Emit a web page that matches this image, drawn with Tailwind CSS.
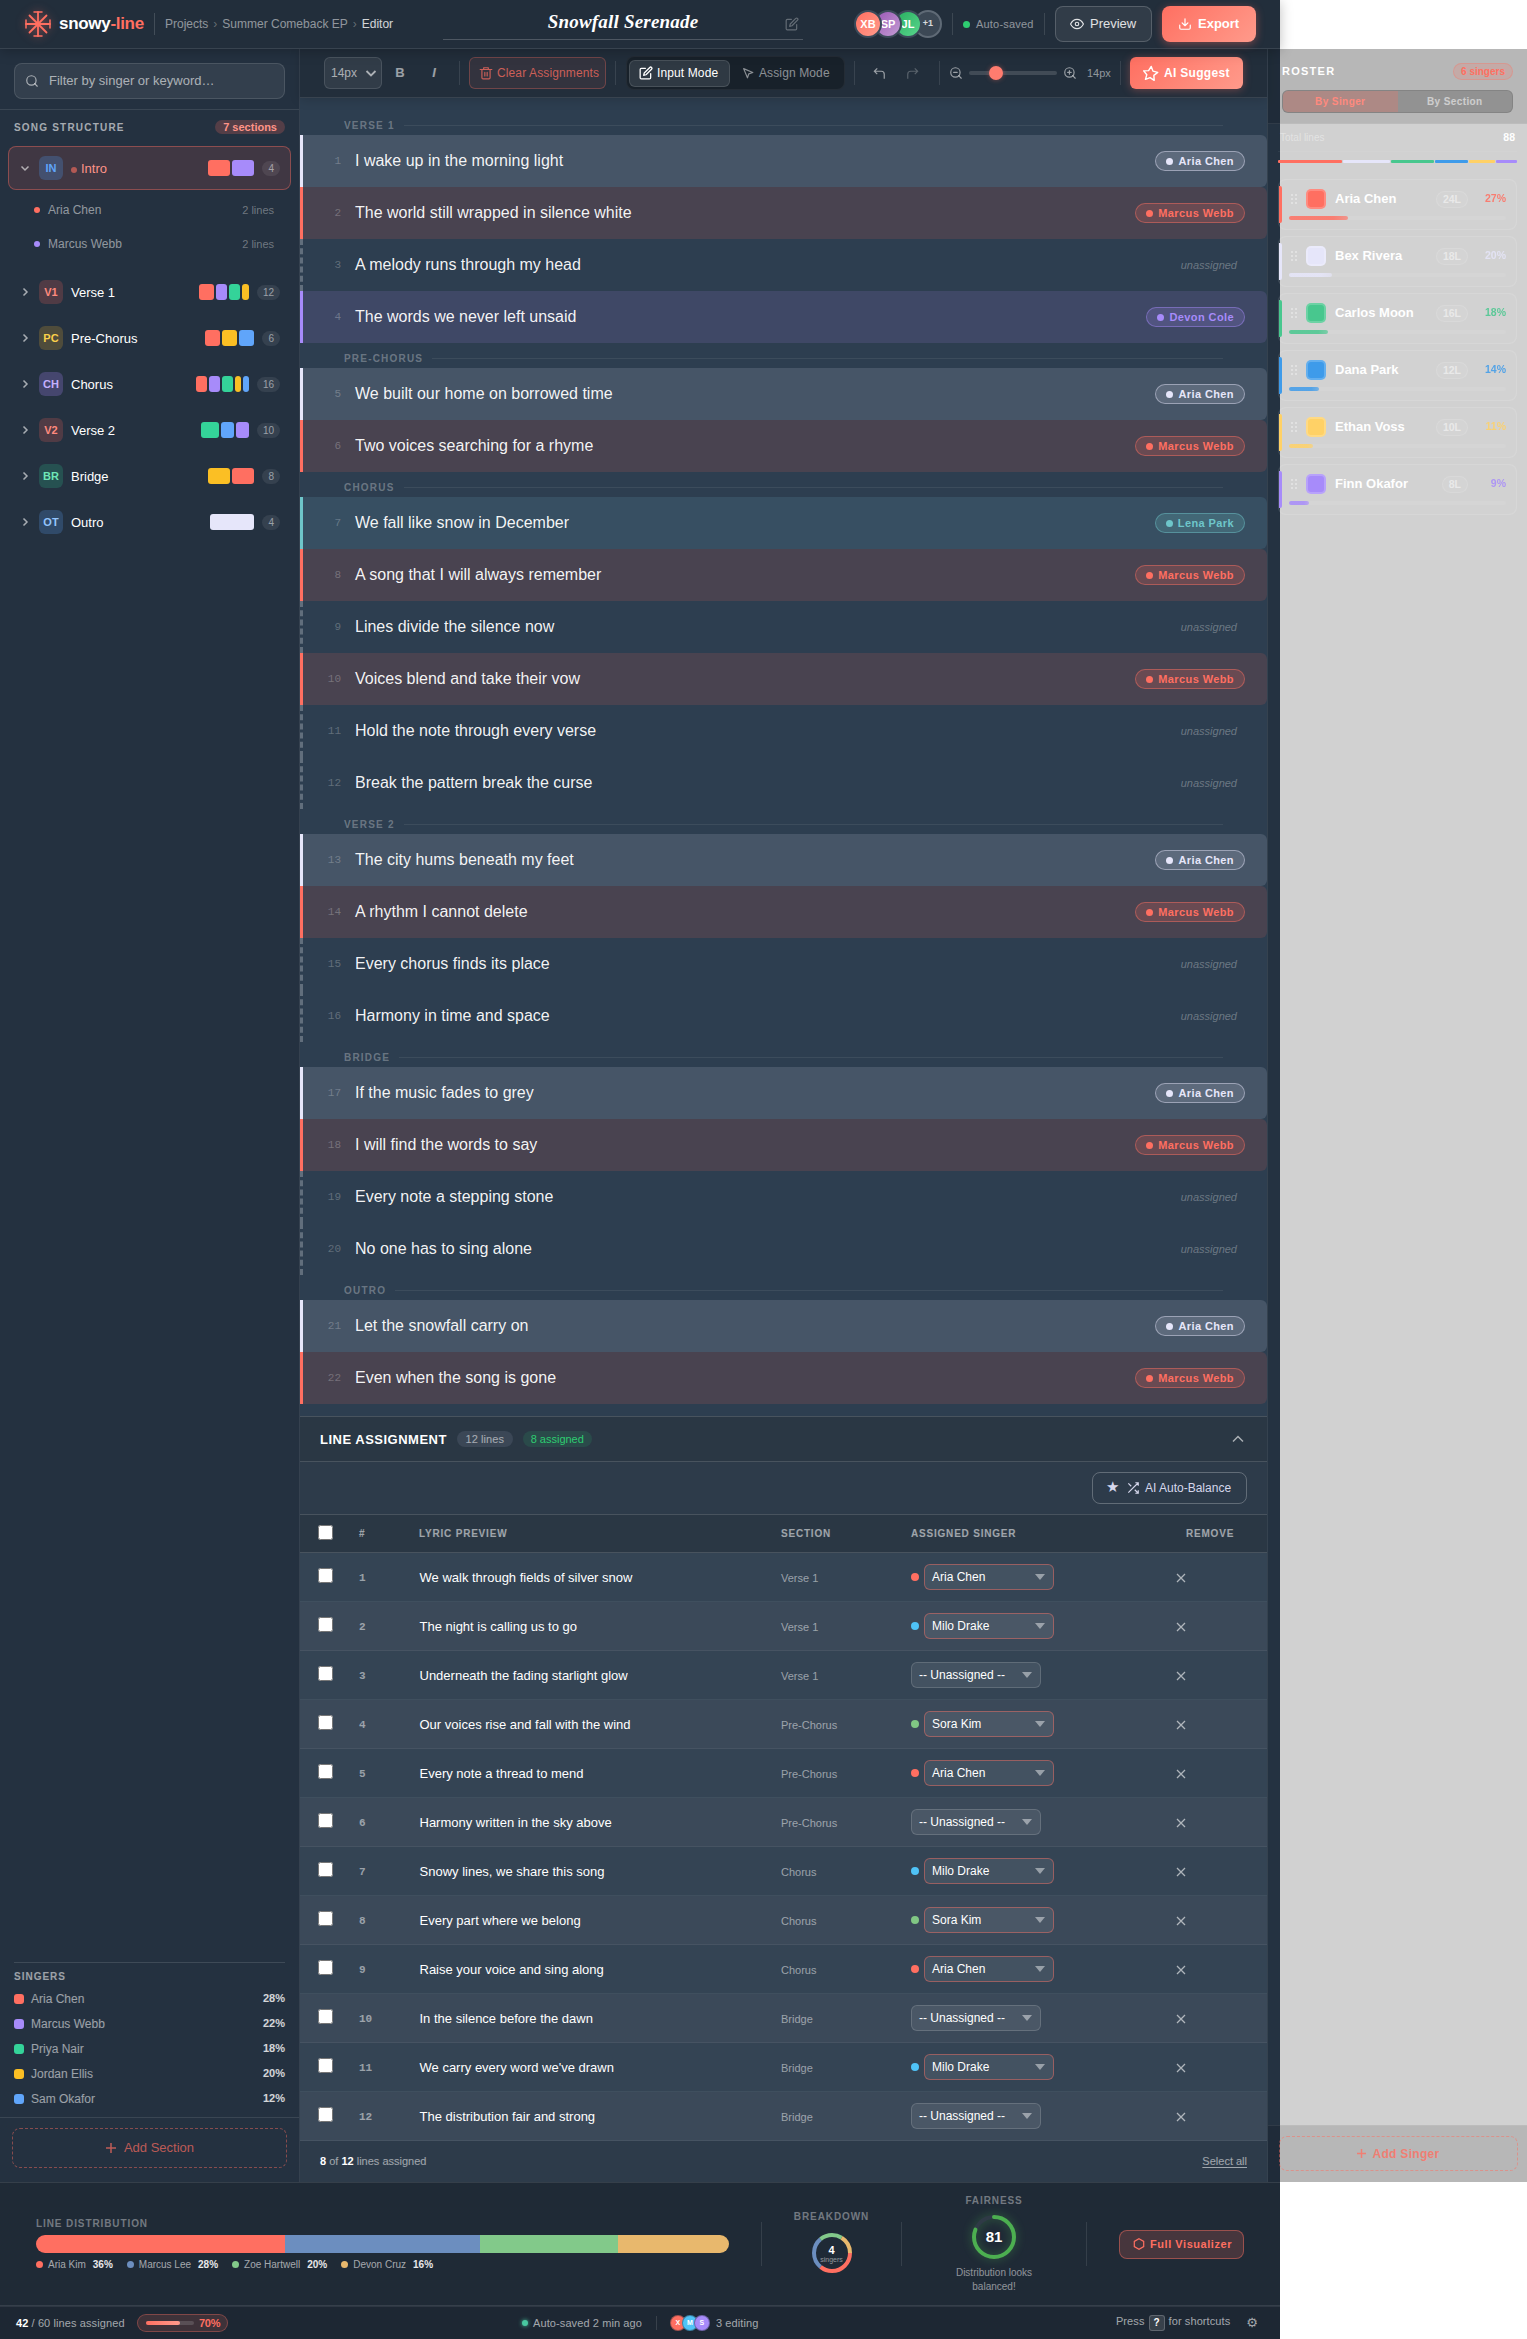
<!DOCTYPE html>
<html lang="en">
<head>
    <meta charset="UTF-8">
    <meta name="viewport" content="width=device-width, initial-scale=1.0">
    <title>snowy-line • Editor</title>
    <script src="https://cdn.jsdelivr.net/npm/@tailwindcss/browser@4"></script>
</head>
<body class="bg-white text-white font-['Liberation_Sans',Arial,sans-serif] antialiased overflow-hidden">

<div class="w-[1280px] h-[2339px] flex flex-col bg-[#2d3e50]">

    <!-- Header -->
    <header class="h-[49px] shrink-0 flex items-center pl-6 border-b border-white/10 bg-[#222e3b] shadow-[0_2px_12px_rgba(0,0,0,0.25)] relative z-10">
        <svg class="w-7 h-7 shrink-0 drop-shadow-[0_0_4px_rgba(255,111,97,0.5)]" viewBox="0 0 28 28" fill="none" stroke="#ff6f61" stroke-width="1.8" stroke-linecap="round">
            <path d="M14 2v24M2 14h24M5.5 5.5l17 17M22.5 5.5l-17 17" />
            <path d="M10 2h8M10 26h8M2 10v8M26 10v8" stroke-width="1.5" />
            <circle cx="14" cy="14" r="2.2" fill="#ff6f61" stroke="none" />
        </svg>
        <div class="ml-[7px] w-[95px] text-[17px] font-bold tracking-[-0.3px]">snowy<span class="text-[#ff6f61]">-line</span></div>
        <div class="w-px h-[22px] bg-white/15"></div>
        <nav class="ml-[10px] w-[278px] flex gap-[5px] text-xs text-white/50">
            <span>Projects</span><span class="text-white/30">›</span><span>Summer Comeback EP</span><span class="text-white/30">›</span><span class="text-white/80">Editor</span>
        </nav>
        <div class="w-[360px] h-8 border-b border-white/20 flex items-center relative">
            <div class="w-full text-center font-['Liberation_Serif',serif] italic font-bold text-[19px] tracking-[0.2px] pb-[3px]">Snowfall Serenade</div>
            <svg class="absolute right-[4px] top-[9px] w-[14px] h-[14px] text-white/30" viewBox="0 0 24 24" fill="none" stroke="currentColor" stroke-width="2" stroke-linecap="round" stroke-linejoin="round"><path d="M11 4H4a2 2 0 0 0-2 2v14a2 2 0 0 0 2 2h14a2 2 0 0 0 2-2v-7"/><path d="M18.5 2.5a2.12 2.12 0 0 1 3 3L12 15l-4 1 1-4z"/></svg>
        </div>
        <div class="ml-[51px] flex text-[11px] font-bold">
            <div class="w-7 h-7 rounded-full border-2 border-[#3b4a59] bg-linear-135 from-[#ff6f61] to-[#ff9a8b] flex items-center justify-center relative z-3">XB</div>
            <div class="w-7 h-7 -ml-2 rounded-full border-2 border-[#3b4a59] bg-linear-135 from-[#9b59b6] to-[#c39bd3] flex items-center justify-center relative z-2">SP</div>
            <div class="w-7 h-7 -ml-2 rounded-full border-2 border-[#3b4a59] bg-linear-135 from-[#27ae60] to-[#58d68d] flex items-center justify-center relative z-1">JL</div>
            <div class="w-7 h-7 -ml-2 rounded-full border-2 border-[#5f6a76] bg-[#3c4855] flex items-center justify-center text-[9px] text-white/80">+1</div>
        </div>
        <div class="ml-[10px] w-px h-[22px] bg-white/12"></div>
        <div class="ml-[10px] w-[7px] h-[7px] rounded-full bg-[#2ecc71]"></div>
        <div class="ml-[6px] w-[68px] text-[11px] tracking-[0.2px] text-white/50">Auto-saved</div>
        <div class="w-px h-[22px] bg-white/12"></div>
        <button class="ml-[10px] mb-px w-[97px] h-9 rounded-lg border border-white/18 bg-white/7 flex items-center pl-[14px] text-[13px] text-white/85">
            <svg class="w-[14px] h-[14px] mr-[6px]" viewBox="0 0 24 24" fill="none" stroke="currentColor" stroke-width="2"><path d="M1 12s4-8 11-8 11 8 11 8-4 8-11 8-11-8-11-8z"/><circle cx="12" cy="12" r="3"/></svg>Preview
        </button>
        <button class="ml-[10px] mb-px w-[94px] h-9 rounded-lg bg-linear-135 from-[#ff6f61] to-[#ff9a8b] shadow-[0_2px_8px_rgba(255,111,97,0.4)] flex items-center pl-4 text-[13px] font-bold">
            <svg class="w-[14px] h-[14px] mr-[6px]" viewBox="0 0 24 24" fill="none" stroke="currentColor" stroke-width="2" stroke-linecap="round" stroke-linejoin="round"><path d="M3 14v5a2 2 0 0 0 2 2h14a2 2 0 0 0 2-2v-5M7 10l5 5 5-5M12 15V3"/></svg>Export
        </button>
    </header>

    <main class="h-[2133px] w-[1527px] shrink-0 flex">

        <!-- Sidebar -->
        <aside class="w-[300px] shrink-0 border-r border-white/8 bg-[#243140] flex flex-col">
            <div class="h-[61px] shrink-0 border-b border-white/10 pt-[14px] px-[14px]">
                <div class="h-9 w-[271px] rounded-lg border border-white/12 bg-white/7 flex items-center pl-[10px] text-[13px] text-white/60">
                    <svg class="w-[14px] h-[14px] mr-[10px]" viewBox="0 0 24 24" fill="none" stroke="currentColor" stroke-width="2" stroke-linecap="round"><circle cx="11" cy="11" r="8"/><path d="M21 21l-4.35-4.35"/></svg>Filter by singer or keyword…
                </div>
            </div>
            <div class="h-[34px] mb-[2px] shrink-0 flex items-center justify-between px-[14px]">
                <span class="text-[10px] font-bold tracking-[1.2px] text-white/60">SONG STRUCTURE</span>
                <span class="h-[14px] leading-[14px] rounded-full bg-[#ff6f61]/22 px-2 text-[11px] font-bold text-[#ff9488]">7 sections</span>
            </div>
            <div id="sections" class="flex flex-col px-2"></div>

            <div class="mt-auto px-[14px]">
                <div class="border-t border-white/12 pt-[7px] text-[10px] leading-[14px] font-bold tracking-[1px] text-white/55">SINGERS</div>
                <div id="legend" class="mt-[2px] mb-[6px]"></div>
            </div>
            <div class="h-[65px] shrink-0 border-t border-white/10 pt-[10px] px-3">
                <div class="h-10 w-[275px] rounded-lg border border-dashed border-[#ff6f61]/45 flex items-center justify-center text-[13px] text-[#ff6f61]/70">
                    <svg class="w-3 h-3 mr-[7px]" viewBox="0 0 12 12" stroke="currentColor" stroke-width="1.5"><path d="M6 1v10M1 6h10"/></svg>Add Section
                </div>
            </div>
        </aside>

        <!-- Editor -->
        <section class="w-[967px] shrink-0 flex flex-col">
            <div class="h-[49px] shrink-0 border-b border-white/10 bg-[#222e3b] flex items-center pl-6 text-xs shadow-[0_2px_10px_rgba(0,0,0,0.15)]">
                <div class="w-[58px] h-8 rounded-md border border-white/12 bg-white/7 flex items-center pl-[6px] text-white/60">14px
                    <svg class="w-3 h-3 ml-[8px]" viewBox="0 0 12 12" fill="none" stroke="currentColor" stroke-width="1.8"><path d="M1.500 4l4.500 4.500L10.500 4"/></svg>
                </div>
                <div class="ml-[2px] w-8 text-center text-[13px] font-bold text-white/55">B</div>
                <div class="ml-[2px] w-8 text-center text-[13px] font-bold italic text-white/55">I</div>
                <div class="ml-[9px] w-px h-6 bg-white/10"></div>
                <div class="ml-[9px] w-[137px] h-8 rounded-md border border-[#ff6f61]/30 bg-[#ff6f61]/8 flex items-center pl-[9px] tracking-[0.12px] text-[#ff6f61]/75">
                    <svg class="w-[14px] h-[14px] mr-[4px]" viewBox="0 0 24 24" fill="none" stroke="currentColor" stroke-width="2" stroke-linecap="round" stroke-linejoin="round"><path d="M2 6h20M19 6v14a2 2 0 0 1-2 2H7a2 2 0 0 1-2-2V6M8 6V3h8v3M10 11v6M14 11v6"/></svg>Clear Assignments
                </div>
                <div class="ml-[9px] w-px h-6 bg-white/10"></div>
                <div class="ml-[10px] w-[219px] h-[34px] rounded-lg border border-white/5 bg-[#18212a] flex items-center pl-[2px] tracking-[0.12px]">
                    <div class="w-[101px] h-[27px] rounded-md border border-white/12 bg-[#2f3943] flex items-center pl-[9px] text-white">
                        <svg class="w-[14px] h-[14px] mr-[4px]" viewBox="0 0 24 24" fill="none" stroke="currentColor" stroke-width="2.200" stroke-linecap="round" stroke-linejoin="round"><path d="M11 4H4a2 2 0 0 0-2 2v14a2 2 0 0 0 2 2h14a2 2 0 0 0 2-2v-7"/><path d="M18.500 2.500a2.120 2.120 0 0 1 3 3L12 15l-4 1 1-4z"/></svg>Input Mode
                    </div>
                    <div class="ml-[12px] flex items-center text-white/50">
                        <svg class="w-[13px] h-[13px] mr-[4px]" viewBox="0 0 24 24" fill="none" stroke="currentColor" stroke-width="2.200" stroke-linejoin="round"><path d="M3 3l7.070 16.970 2.510-7.390 7.390-2.510z"/></svg>Assign Mode
                    </div>
                </div>
                <div class="ml-[9px] w-px h-6 bg-white/10"></div>
                <svg class="ml-[17px] w-[14px] h-[14px] text-white/55" viewBox="0 0 24 24" fill="none" stroke="currentColor" stroke-width="2"><path d="M9 14L4 9l5-5M4 9h12a5 5 0 0 1 5 5v8" /></svg>
                <svg class="ml-[20px] w-[14px] h-[14px] text-white/25" viewBox="0 0 24 24" fill="none" stroke="currentColor" stroke-width="2"><path d="M15 14l5-5-5-5M20 9H8a5 5 0 0 0-5 5v8" /></svg>
                <div class="ml-[19px] w-px h-6 bg-white/10"></div>
                <svg class="ml-[9px] w-[14px] h-[14px] text-white/55" viewBox="0 0 24 24" fill="none" stroke="currentColor" stroke-width="2" stroke-linecap="round"><circle cx="11" cy="11" r="8"/><path d="M21 21l-4.350-4.350M8 11h6"/></svg>
                <div class="ml-[6px] w-[88px] h-1 rounded-full bg-white/14 flex items-center pl-5"><div class="w-[14px] h-[14px] rounded-full bg-[#ff7c6f] shadow-[0_0_5px_rgba(255,111,97,0.4)]"></div></div>
                <svg class="ml-[6px] w-[14px] h-[14px] text-white/55" viewBox="0 0 24 24" fill="none" stroke="currentColor" stroke-width="2" stroke-linecap="round"><circle cx="11" cy="11" r="8"/><path d="M21 21l-4.350-4.350M8 11h6M11 8v6"/></svg>
                <div class="ml-[10px] w-[33px] text-[11px] text-white/50">14px</div>
                <div class="w-px h-6 bg-white/10"></div>
                <div class="ml-[9px] w-[113px] h-8 rounded-md bg-linear-135 from-[#ff6f61] to-[#ff9a8b] shadow-[0_1px_8px_rgba(255,111,97,0.35)] flex items-center pl-[12px] font-bold tracking-[0.3px]">
                    <svg class="w-[17px] h-[17px] mr-[5px] rotate-6" viewBox="0 0 24 24" fill="none" stroke="currentColor" stroke-width="2" stroke-linejoin="round"><path d="M12 2l3.100 6.300 6.900 1-5 4.900 1.200 6.800-6.200-3.200L5.800 21 7 14.200 2 9.300l6.900-1z"/></svg>AI Suggest
                </div>
            </div>

            <div id="lyrics" class="pt-3 h-[1318px] shrink-0"></div>

            <!-- Line assignment panel -->
            <div class="h-[46px] shrink-0 border-y border-white/14 bg-[#2a3744] flex items-center pl-5 pr-[22px]">
                <span class="pt-px text-[13px] font-bold tracking-[0.5px]">LINE ASSIGNMENT</span>
                <span class="ml-[10px] h-4 leading-4 px-[8.5px] rounded-full bg-[#3b4756] text-[11px] tracking-[0.1px] text-white/55">12 lines</span>
                <span class="ml-[10px] h-4 leading-4 px-2 rounded-full bg-[#2a4a4a] text-[11px] text-[#2ecc71]">8 assigned</span>
                <svg class="ml-auto w-[14px] h-[14px] text-white/60" viewBox="0 0 14 14" fill="none" stroke="currentColor" stroke-width="1.500"><path d="M2 9.500l5-5 5 5"/></svg>
            </div>
            <div class="h-[52px] shrink-0 bg-[#2d3b4a] flex items-center justify-end pr-5">
                <div class="w-[155px] h-8 rounded-lg border border-white/25 flex items-center pl-[13px] text-xs text-[#d5d7ec]">
                    <span class="w-[20px] font-['DejaVu_Sans',sans-serif] text-[15px]">★</span>
                    <svg class="w-[14px] h-[14px] mr-[5px]" viewBox="0 0 24 24" fill="none" stroke="currentColor" stroke-width="2"><path d="M16 3h5v5M4 20L21 3M21 16v5h-5M15 15l6 6M4 4l5 5"/></svg>AI Auto-Balance
                </div>
            </div>
            <div class="h-[39px] shrink-0 border-y border-white/14 bg-[#2a3744] grid grid-cols-[41px_60px_362px_130px_275px_1fr] items-center pl-[18px] text-[10px] font-bold tracking-[0.8px] text-white/55">
                <input type="checkbox" class="w-[15px] h-[15px] mb-[2px]"><span>#</span><span>LYRIC PREVIEW</span><span>SECTION</span><span>ASSIGNED SINGER</span><span>REMOVE</span>
            </div>
            <div id="rows"></div>
            <div class="flex-1 bg-[#2d3b4a] flex items-center justify-between pl-5 pr-5 text-[11px] text-white/55">
                <span><b class="text-white">8</b> of <b class="text-white">12</b> lines assigned</span>
                <span class="underline underline-offset-2">Select all</span>
            </div>
        </section>

        <!-- Roster -->
        <aside class="w-[260px] shrink-0 border-l border-white/8 bg-black/18 flex flex-col">
            <div class="h-[75px] shrink-0 border-b border-white/8 bg-black/12 px-[14px] pt-[14px]">
                <div class="h-[17px] w-[231px] flex items-center justify-between">
                    <span class="text-[11px] font-bold tracking-[1.25px]">ROSTER</span>
                    <span class="h-[17px] leading-[15px] px-[7px] rounded-full border border-[#ff6f61]/30 bg-[#ff6f61]/18 text-[10px] font-bold text-[#ff6f61]">6 singers</span>
                </div>
                <div class="mt-[10px] w-[231px] h-[23px] rounded-md border border-black/10 bg-black/20 flex text-[10px] font-bold tracking-[0.4px] leading-[21px] text-center overflow-hidden">
                    <span class="w-1/2 bg-[#ff6f61]/25 text-[#ff8a7e]">By Singer</span>
                    <span class="w-1/2 text-white/55">By Section</span>
                </div>
            </div>
            <div class="pl-[10px] w-[249px] flex-1">
                <div class="h-[28px] px-[2px] border-b border-white/6 flex items-center justify-between text-[10px]">
                    <span class="text-white/40">Total lines</span><b class="text-[10.5px]">88</b>
                </div>
                <div id="split" class="mt-2 h-[3px] flex gap-px"></div>
                <div id="roster" class="mt-4 flex flex-col gap-[6px]"></div>
            </div>
            <div class="h-[57px] shrink-0 border-t border-white/8 bg-black/12 pt-[10px] pl-[11px]">
                <div class="w-[239px] h-[35px] rounded-lg border border-dashed border-[#ff6f61]/50 flex items-center justify-center text-xs font-bold tracking-[0.3px] text-[#ff6f61]/80">
                    <svg class="w-[9px] h-[9px] mr-[6px]" viewBox="0 0 10 10" stroke="currentColor" stroke-width="1.600"><path d="M5 0v10M0 5h10"/></svg>Add Singer
                </div>
            </div>
        </aside>
    </main>

    <!-- Distribution -->
    <div class="h-[124px] shrink-0 border-y border-white/10 bg-[#1f2a36] flex items-center pl-9 text-[10px]">
        <div class="w-[693px]">
            <div class="h-[12px] leading-[12px] mb-[5px] font-bold tracking-[0.9px] text-white/38">LINE DISTRIBUTION</div>
            <div class="h-[18px] rounded-full overflow-hidden flex">
                <div class="w-[36%] bg-[#ff6f61]"></div><div class="w-[28%] bg-[#6c8ebf]"></div><div class="w-[20%] bg-[#82c98a]"></div><div class="w-[16%] bg-[#e8b86d]"></div>
            </div>
            <div id="share" class="mt-[6px] h-3 leading-3 flex gap-[14px] text-white/60"></div>
        </div>
        <div class="ml-8 w-px h-11 bg-white/10"></div>
        <div class="w-[139px] flex flex-col items-center">
            <div class="h-3 leading-3 font-bold tracking-[0.9px] text-white/38">BREAKDOWN</div>
            <div class="mt-[6px] w-12 h-12 relative">
                <svg class="w-12 h-12" viewBox="-24 -24 48 48" fill="none" stroke-width="4">
                    <circle r="18" stroke="#ff6f61" pathLength="100" stroke-dasharray="36 64"/>
                    <circle r="18" stroke="#6c8ebf" pathLength="100" stroke-dasharray="28 72" stroke-dashoffset="-36"/>
                    <circle r="18" stroke="#82c98a" pathLength="100" stroke-dasharray="20 80" stroke-dashoffset="-64"/>
                    <circle r="18" stroke="#e8b86d" pathLength="100" stroke-dasharray="16 84" stroke-dashoffset="-84"/>
                </svg>
                <div class="absolute inset-0 pt-[3px] flex flex-col items-center justify-center"><b class="text-[11px] leading-[11px]">4</b><span class="text-[7px] leading-[8px] text-white/50">singers</span></div>
            </div>
        </div>
        <div class="w-px h-11 bg-white/10"></div>
        <div class="w-[184px] flex flex-col items-center">
            <div class="h-3 leading-3 font-bold tracking-[0.9px] text-white/38">FAIRNESS</div>
            <div class="mt-1 w-[52px] h-[52px] relative">
                <svg class="w-[52px] h-[52px] drop-shadow-[0_0_5px_rgba(76,175,80,0.45)]" viewBox="-26 -26 52 52" fill="none" stroke-width="4">
                    <circle r="20" stroke="#2f3a46"/>
                    <circle r="20" stroke="#4caf50" pathLength="100" stroke-dasharray="81 19" stroke-linecap="round" transform="rotate(-90)"/>
                </svg>
                <b class="absolute inset-0 flex items-center justify-center text-[15px] pt-px">81</b>
            </div>
            <div class="mt-[3px] w-20 text-center leading-[14px] text-white/50">Distribution looks balanced!</div>
        </div>
        <div class="w-px h-11 bg-white/10"></div>
        <div class="ml-8 w-[125px] h-[29px] rounded-lg border border-[#ff6f61]/45 bg-[#ff6f61]/18 flex items-center pl-[13px] text-[11px] font-bold tracking-[0.55px] text-[#ff6f61]">
            <svg class="w-[12px] h-[12px] mr-[5px]" viewBox="0 0 12 12" fill="none" stroke="currentColor" stroke-width="1.200"><path d="M6 .8l4.700 2.600v5.200L6 11.200 1.300 8.600V3.400z"/></svg>Full Visualizer
        </div>
    </div>

    <!-- Status bar -->
    <footer class="h-[33px] shrink-0 border-t border-white/8 bg-[#1d2733] flex items-center pl-4 text-[11px] tracking-[0.1px] text-white/60">
        <span class="w-[121px]"><b class="text-white">42</b> / 60 lines assigned</span>
        <div class="w-[91px] h-[18px] rounded-full border border-[#ff6f61]/35 bg-[#ff6f61]/15 flex items-center pl-[8px] font-bold text-[#ff6f61]">
            <div class="w-12 h-1 rounded-full bg-white/14 mr-[5px]"><div class="w-[70%] h-1 rounded-full bg-linear-to-r from-[#ff6f61] to-[#ff9a8b]"></div></div><span class="tracking-[-0.3px]">70%</span>
        </div>
        <div class="ml-[294px] w-[6px] h-[6px] rounded-full bg-[#48c9a0] shadow-[0_0_4px_#48c9a0]"></div>
        <span class="ml-[5px] w-[123px]">Auto-saved 2 min ago</span>
        <div class="w-px h-[14px] bg-white/12"></div>
        <div class="ml-[13px] flex text-[7px] font-bold text-white">
            <span class="w-4 h-4 rounded-full border border-[#1d2733]/40 bg-[#ff6f61] flex items-center justify-center">X</span>
            <span class="w-4 h-4 -ml-1 rounded-full border border-[#1d2733]/40 bg-[#4fc3f7] flex items-center justify-center">M</span>
            <span class="w-4 h-4 -ml-1 rounded-full border border-[#1d2733]/40 bg-[#a78bfa] flex items-center justify-center">S</span>
        </div>
        <span class="ml-[6px]">3 editing</span>
        <div class="ml-auto mb-1 flex items-center gap-[4px]">Press <span class="w-4 h-4 mt-[3px] rounded-[3px] border border-white/20 bg-white/12 text-center leading-[13px] text-[10px] font-bold text-white">?</span> for shortcuts</div>
        <span class="ml-[16px] mr-[22px] font-['DejaVu_Sans',sans-serif] text-[13px] tracking-normal">⚙</span>
    </footer>
</div>

<script>
    const R = '#ff6f61', P = '#a78bfa', G = '#34d399', Y = '#fbbf24', B = '#60a5fa', W = '#e6e6fa';

    // code, badge classes, name, count, [colour, width] swatches
    const sections = [
        ['IN', 'bg-[#43506f] text-[#60a5fa]', 'Intro', 4, [[R, 22], [P, 22]]],
        ['V1', 'bg-[#503b45] text-[#ff8a7e]', 'Verse 1', 12, [[R, 15], [P, 11], [G, 11], [Y, 7]]],
        ['PC', 'bg-[#4f4c3b] text-[#fbd04a]', 'Pre-Chorus', 6, [[R, 15], [Y, 15], [B, 15]]],
        ['CH', 'bg-[#45466e] text-[#c4b0ff]', 'Chorus', 16, [[R, 11], [P, 11], [G, 11], [Y, 6], [B, 6]]],
        ['V2', 'bg-[#503b45] text-[#ff8a7e]', 'Verse 2', 10, [[G, 18], [B, 13], [P, 13]]],
        ['BR', 'bg-[#265151] text-[#6ee7b7]', 'Bridge', 8, [[Y, 22], [R, 22]]],
        ['OT', 'bg-[#304a69] text-[#93c5fd]', 'Outro', 4, [[W, 44]]],
    ];
    document.getElementById('sections').innerHTML = sections.map(([code, cls, name, n, sw], i) => `
        <div class="h-11 w-[283px] ${i ? 'mb-[2px]' : ''} pr-[10px] pl-[11px] flex items-center rounded-lg border ${i ? 'border-transparent' : 'border-[#ff6f61]/40 bg-[#403743]'}">
            <svg class="w-[10px] h-[10px] mr-[9px] text-white/60" viewBox="0 0 10 10" fill="none" stroke="currentColor" stroke-width="1.5"><path d="${i ? 'M3.500 1.500L7 5 3.500 8.500' : 'M1.500 3.500L5 7l3.500-3.500'}"/></svg>
            <span class="w-6 h-6 rounded-md flex items-center justify-center text-[11px] leading-4 font-bold ${cls}">${code}</span>
            <span class="ml-2 pt-[2px] text-[13px] leading-4 ${i ? 'text-white' : 'text-[#ff9488] flex items-center'}">${i ? '' : '<i class="w-[6px] h-[6px] mt-[2px] mr-1 rounded-full bg-[#ff6f61]/60"></i>'}${name}</span>
            <span class="ml-auto flex gap-[2px]">${sw.map(([c, w]) => `<i class="h-4 rounded-[3px]" style="background:${c};width:${w}px"></i>`).join('')}</span>
            <span class="ml-2 h-[15px] leading-[15px] px-[6px] rounded-full bg-white/8 text-[10px] text-white/50">${n}</span>
        </div>
        ${i ? '' : `<div class="pt-[3px] mb-[9px] pl-[26px] pr-[17px]">${[['Aria Chen', R], ['Marcus Webb', P]].map(([s, c]) => `
            <div class="h-[34px] flex items-center text-xs text-white/50"><i class="w-[6px] h-[6px] mr-2 rounded-full" style="background:${c}"></i>${s}<span class="ml-auto text-[11px] text-white/35">2 lines</span></div>`).join('')}</div>`}
    `).join('');

    document.getElementById('legend').innerHTML = [['Aria Chen', R, 28], ['Marcus Webb', P, 22], ['Priya Nair', G, 18], ['Jordan Ellis', Y, 20], ['Sam Okafor', B, 12]].map(([s, c, n]) => `
        <div class="h-[25px] flex items-center text-xs text-white/55"><i class="w-[10px] h-[10px] mr-[7px] rounded-[3px]" style="background:${c}"></i>${s}<b class="ml-auto text-[11px] text-white/80">${n}%</b></div>`).join('');

    // lyric line styles by singer
    const singers = {
        A: ['Aria Chen', 'border-[#e6e6fa] bg-[#465567]', 'border-[#e6e6fa]/45 bg-[#e6e6fa]/15 text-[#e6e6fa]', 'bg-[#e6e6fa]'],
        M: ['Marcus Webb', 'border-[#ff6f61] bg-[#494350]', 'border-[#ff6f61]/45 bg-[#ff6f61]/18 text-[#ff6f61]', 'bg-[#ff6f61]'],
        D: ['Devon Cole', 'border-[#a78bfa] bg-[#3f4866]', 'border-[#a78bfa]/45 bg-[#a78bfa]/18 text-[#a78bfa]', 'bg-[#a78bfa]'],
        L: ['Lena Park', 'border-[#6ec6ca] bg-[#374f62]', 'border-[#6ec6ca]/45 bg-[#6ec6ca]/20 text-[#6ec6ca]', 'bg-[#6ec6ca]'],
    };
    const lyrics = [
        '#VERSE 1', 'AI wake up in the morning light', 'MThe world still wrapped in silence white', '-A melody runs through my head', 'DThe words we never left unsaid',
        '#PRE-CHORUS', 'AWe built our home on borrowed time', 'MTwo voices searching for a rhyme',
        '#CHORUS', 'LWe fall like snow in December', 'MA song that I will always remember', '-Lines divide the silence now', 'MVoices blend and take their vow', '-Hold the note through every verse', '-Break the pattern break the curse',
        '#VERSE 2', 'AThe city hums beneath my feet', 'MA rhythm I cannot delete', '-Every chorus finds its place', '-Harmony in time and space',
        '#BRIDGE', 'AIf the music fades to grey', 'MI will find the words to say', '-Every note a stepping stone', '-No one has to sing alone',
        '#OUTRO', 'ALet the snowfall carry on', 'MEven when the song is gone',
    ];
    let no = 0;
    document.getElementById('lyrics').innerHTML = lyrics.map(l => {
        const k = l[0], text = l.slice(1);
        if (k === '#') return `<div class="h-[25px] pt-[6px] pl-11 pr-11 flex items-center gap-[9px] text-[10px] font-bold tracking-[1.2px] text-white/30">${text}<i class="flex-1 h-px bg-white/7"></i></div>`;
        const s = singers[k];
        return `<div class="h-[52px] border-l-3 rounded-r-md flex items-center pr-[22px] ${s ? s[1] : 'border-dashed border-white/25'}">
            <span class="w-[38px] text-right font-['Liberation_Mono',monospace] text-[11px] text-white/25">${++no}</span>
            <span class="ml-[14px] text-[16px] text-white/95">${text}</span>
            ${s ? `<span class="ml-auto h-5 px-[10px] rounded-full border flex items-center text-[11px] font-bold tracking-[0.4px] ${s[2]}"><i class="w-[7px] h-[7px] mr-[5px] rounded-full ${s[3]}"></i>${s[0]}</span>`
                : '<span class="ml-auto mr-[8px] text-[11px] italic text-white/30">unassigned</span>'}
        </div>`;
    }).join('');

    const dots = { 'Aria Chen': '#ff6f61', 'Milo Drake': '#4fc3f7', 'Sora Kim': '#81c784' };
    document.getElementById('rows').innerHTML = [
        ['We walk through fields of silver snow', 'Verse 1', 'Aria Chen'],
        ['The night is calling us to go', 'Verse 1', 'Milo Drake'],
        ['Underneath the fading starlight glow', 'Verse 1', ''],
        ['Our voices rise and fall with the wind', 'Pre-Chorus', 'Sora Kim'],
        ['Every note a thread to mend', 'Pre-Chorus', 'Aria Chen'],
        ['Harmony written in the sky above', 'Pre-Chorus', ''],
        ['Snowy lines, we share this song', 'Chorus', 'Milo Drake'],
        ['Every part where we belong', 'Chorus', 'Sora Kim'],
        ['Raise your voice and sing along', 'Chorus', 'Aria Chen'],
        ['In the silence before the dawn', 'Bridge', ''],
        ["We carry every word we've drawn", 'Bridge', 'Milo Drake'],
        ['The distribution fair and strong', 'Bridge', ''],
    ].map(([t, sec, s], i) => `
        <div class="h-[49px] border-b border-white/6 grid grid-cols-[41px_60px_362px_130px_265px_1fr] items-center pl-[18px] ${i % 2 ? 'bg-[#3b4959]' : 'bg-[#344454]'}">
            <input type="checkbox" class="w-[15px] h-[15px] mb-[3px]">
            <span class="pt-[3px] font-['Liberation_Mono',monospace] text-[11px] font-bold text-white/50">${i + 1}</span>
            <span class="pt-px pl-[0.5px] text-[13px]">${t}</span>
            <span class="pt-[3px] text-[11px] text-white/50">${sec}</span>
            <span class="flex items-center text-xs">
                ${s ? `<i class="w-2 h-2 mr-[5px] rounded-full" style="background:${dots[s]}"></i>` : ''}
                <span class="w-[130px] h-[26px] rounded-md border ${s ? 'border-[#ff6f61]/45' : 'border-white/15'} bg-white/8 flex items-center justify-between pl-[7px] pr-2">${s || '-- Unassigned --'}
                <svg class="w-[10px] h-[6px] text-white/45" viewBox="0 0 10 6" fill="currentColor"><path d="M0 0h10L5 6z"/></svg></span>
            </span>
            <svg class="w-[10px] h-[10px] mt-px text-white/60" viewBox="0 0 10 10" stroke="currentColor" stroke-width="1.300"><path d="M1 1l8 8M9 1L1 9"/></svg>
        </div>`).join('');

    const roster = [['Aria Chen', '#ff6f61', 24, 27], ['Bex Rivera', '#e6e6fa', 18, 20], ['Carlos Moon', '#48c78e', 16, 18], ['Dana Park', '#3e9bea', 12, 14], ['Ethan Voss', '#ffd166', 10, 11], ['Finn Okafor', '#a78bfa', 8, 9]];
    document.getElementById('split').innerHTML = roster.map(r => `<i class="h-[3px] rounded-[1px]" style="background:${r[1]};flex:${r[3]}"></i>`).join('');
    document.getElementById('roster').innerHTML = roster.map(([name, c, n, pc]) => `
        <div class="h-[51px] rounded-lg border border-white/10 bg-white/4 flex">
            <i class="w-[3px] h-[37px] mt-[6px] rounded-r-[2px]" style="background:${c}"></i>
            <div class="pl-[7px] pr-[10px] pt-[9px] flex-1">
                <div class="h-5 flex items-center">
                    <svg class="w-[7px] h-[10px] ml-[2px] mr-[8px] text-white/35" viewBox="0 0 7 10" fill="currentColor"><path d="M0 0h2v2H0zM4 0h2v2H4zM0 4h2v2H0zM4 4h2v2H4zM0 8h2v2H0zM4 8h2v2H4z"/></svg>
                    <i class="w-5 h-5 rounded-[5px] border-2 border-white/20" style="background:${c}"></i>
                    <b class="ml-[9px] text-[13px]">${name}</b>
                    <span class="ml-auto h-[17px] leading-[15px] px-[6px] rounded-full border border-white/10 bg-white/6 text-[10.5px] font-bold text-white/50">${n}L</span>
                    <b class="w-[38px] text-right text-[10.5px] opacity-85" style="color:${c}">${pc}%</b>
                </div>
                <div class="mt-[7px] h-1 rounded-full bg-white/8"><div class="h-1 rounded-full opacity-85" style="width:${pc}%;background:linear-gradient(90deg,${c} 75%,${c}bb)"></div></div>
            </div>
        </div>`).join('');

    document.getElementById('share').innerHTML = [['Aria Kim', '#ff6f61', 36], ['Marcus Lee', '#6c8ebf', 28], ['Zoe Hartwell', '#82c98a', 20], ['Devon Cruz', '#e8b86d', 16]].map(([s, c, n]) => `
        <span class="flex items-center"><i class="w-[7px] h-[7px] mr-[5px] rounded-full" style="background:${c}"></i>${s}<b class="ml-[7px] text-white/90">${n}%</b></span>`).join('');
</script>
</body>
</html>
